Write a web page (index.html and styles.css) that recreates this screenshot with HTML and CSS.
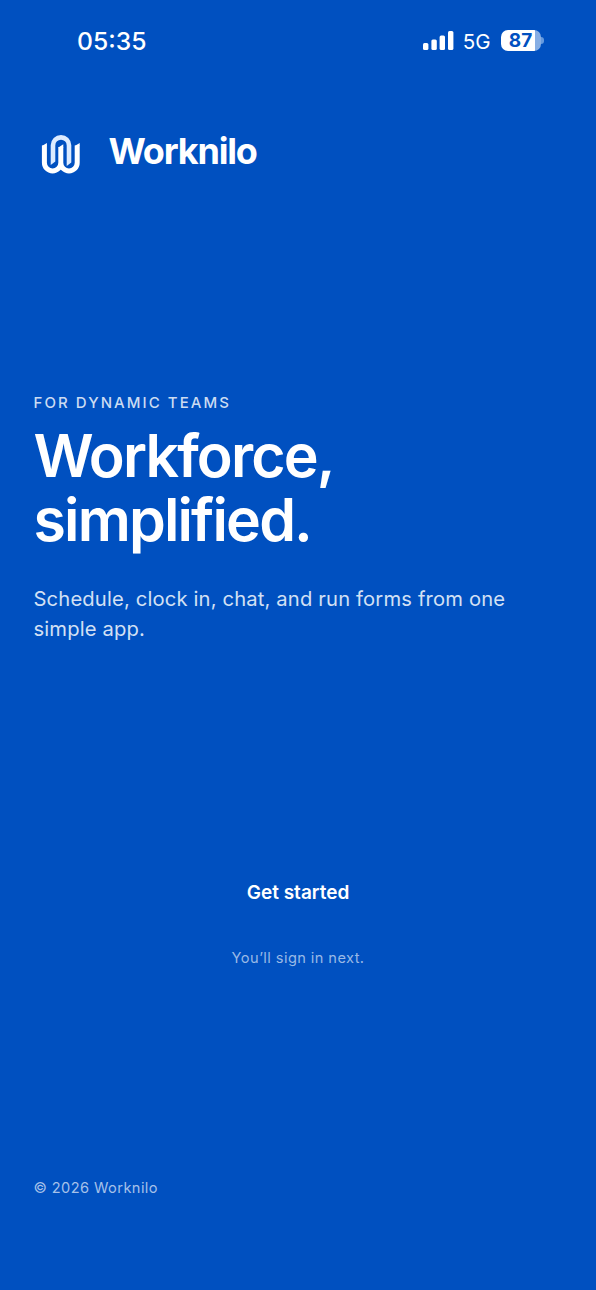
FILE: index.html
```html
<!DOCTYPE html>
<html lang="en">
<head>
    <meta charset="UTF-8">
    <meta name="viewport" content="width=device-width, initial-scale=1.0">
    <title>Worknilo</title>
    <link rel="stylesheet" href="styles.css">
</head>
<body>
    <div class="status-bar">
        <span class="time">05:35</span>
        <div class="status-icons">
            <svg class="signal" width="31" height="20" viewBox="0 0 31 20" fill="#fff">
                <rect x="0" y="12" width="5.4" height="7" rx="1.5"/>
                <rect x="8.4" y="8.5" width="5.4" height="10.5" rx="1.5"/>
                <rect x="16.6" y="4.5" width="5.4" height="14.5" rx="1.5"/>
                <rect x="25" y="0" width="5.4" height="19" rx="1.5"/>
            </svg>
            <span class="network">5G</span>
            <div class="battery"><span class="battery-level">87</span></div>
            <span class="battery-tip"></span>
        </div>
    </div>

    <header class="brand">
        <svg class="logo" width="60" height="60" viewBox="0 0 60 60">
            <path d="M20.7 40V20.2a10.3 10.3 0 0 1 20.6 0v17.3l-4.6 3.5V20.4a5.7 5.7 0 0 0-11.4 0v16.1z" fill="#dcebff"/>
            <path d="M14.4 20.5V37.8a8.2 8.2 0 0 0 16.4 0V22V37.8a8.2 8.2 0 0 0 16.4 0V20.5" fill="none" stroke="#fff" stroke-width="5"/>
            <path d="M11.9 21l5-3v3zM28.3 22.5l5-3.2v3.2zM44.7 21l5-3v3z" fill="#fff"/>
        </svg>
        <span class="brand-name">Worknilo</span>
    </header>

    <main class="hero">
        <p class="eyebrow">FOR DYNAMIC TEAMS</p>
        <h1>Workforce,<br>simplified.</h1>
        <p class="intro">Schedule, clock in, chat, and run forms from one simple app.</p>
    </main>

    <div class="actions">
        <a class="start-button" href="#">Get started</a>
        <p class="hint">You’ll sign in next.</p>
    </div>

    <footer>© 2026 Worknilo</footer>
</body>
</html>
```

FILE: styles.css
```css
/* General Styling */
* {
    box-sizing: border-box;
}

body {
    font-family: 'Inter', sans-serif;
    background: #0050c0;
    color: white;
    margin: 0;
    height: 1290px;
    display: flex;
    flex-direction: column;
}

p, h1 {
    margin: 0;
}

/* Status Bar */
.status-bar {
    display: flex;
    justify-content: space-between;
    align-items: center;
    height: 81px;
    padding: 0 52px 0 77px;
}

.time {
    font-size: 24.7px;
    font-weight: 500;
    line-height: 30px;
    padding-top: 1px;
}

.status-icons {
    display: flex;
    align-items: center;
}

.network {
    font-size: 20.5px;
    margin: 2px 10px 0 9px;
}

.battery {
    width: 40px;
    height: 21px;
    border-radius: 7px;
    background: linear-gradient(to right, #fff 34.5px, #86aee4 34.5px);
    color: #0050c0;
    text-align: center;
}

.battery-level {
    display: block;
    font-size: 19px;
    font-weight: 700;
    line-height: 21px;
}

.battery-tip {
    width: 3px;
    height: 7px;
    margin-left: 0.5px;
    border-radius: 0 3px 3px 0;
    background: #669ade;
}

/* Brand */
.brand {
    display: flex;
    align-items: center;
    height: 60px;
    margin-top: 44px;
    padding-left: 30px;
}

.brand-name {
    font-size: 36px;
    font-weight: 700;
    letter-spacing: -1.2px;
    margin: -8px 0 0 18.5px;
}

/* Hero */
.hero {
    margin-top: 208px;
    padding: 0 34px 0 33.5px;
}

.eyebrow {
    font-size: 15px;
    font-weight: 500;
    line-height: 20px;
    letter-spacing: 2.07px;
    color: #ccdcf2;
}

h1 {
    font-size: 59px;
    font-weight: 600;
    line-height: 64px;
    letter-spacing: -1.85px;
    margin-top: 11px;
}

.intro {
    font-size: 20.2px;
    line-height: 30px;
    letter-spacing: 0.16px;
    color: #d3e0f4;
    margin-top: 32px;
}

/* Actions */
.actions {
    display: flex;
    flex-direction: column;
    align-items: center;
    margin-top: 236px;
}

.start-button {
    font-size: 19px;
    font-weight: 600;
    line-height: 26px;
    color: white;
    text-decoration: none;
}

.hint {
    font-size: 14.6px;
    line-height: 20px;
    letter-spacing: 0.42px;
    color: #99b9e6;
    margin-top: 42px;
}

/* Footer */
footer {
    font-size: 14.6px;
    line-height: 20px;
    letter-spacing: 0.42px;
    color: #a6c1e9;
    margin: auto 34px 92px 33.5px;
}
```
